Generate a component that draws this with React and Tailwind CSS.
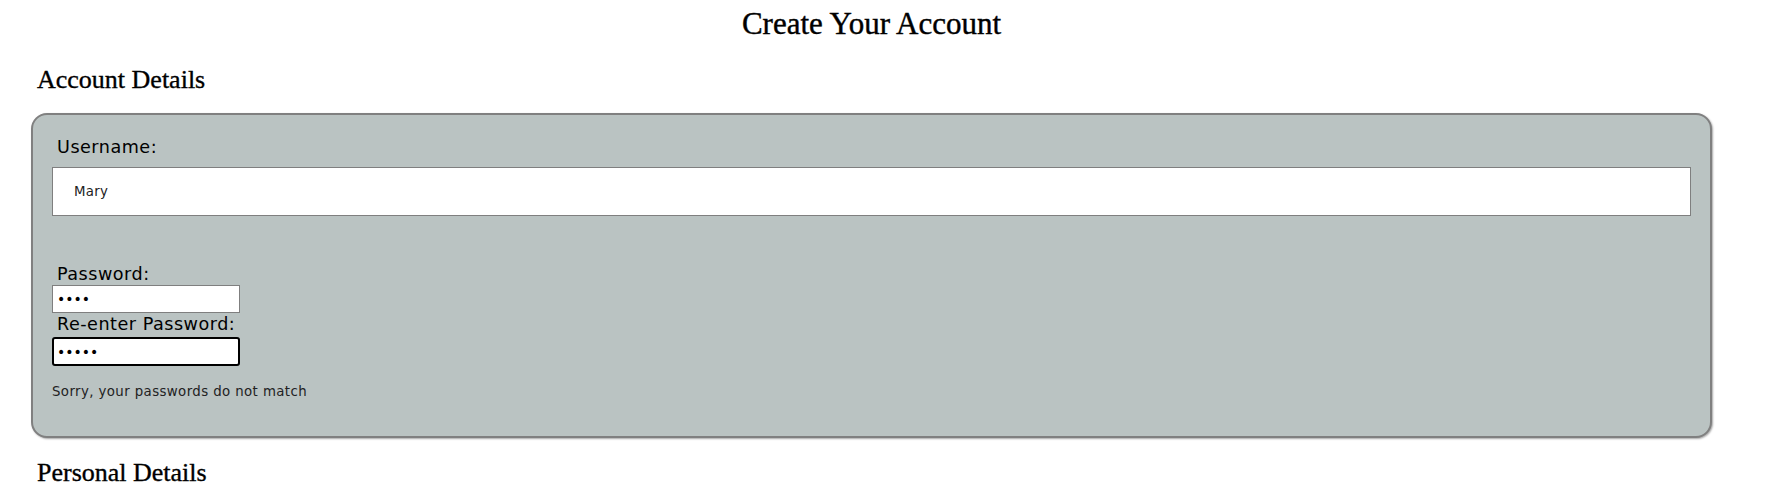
import React from 'react';

const serif = { fontFamily: '"Liberation Serif", "Times New Roman", serif' };

export default function App() {
    return (
        <div className="bg-white min-h-screen">
            <div className="ml-[31px] w-[1681px]">
                {/* Page title */}
                <h1 className="text-center text-[31px] leading-[40px] pt-[4px] text-black [-webkit-text-stroke:0.4px_black]" style={serif}>
                    Create Your Account
                </h1>

                {/* Account section */}
                <h2 className="mt-[20px] ml-[6px] text-[26px] leading-[32px] text-black [-webkit-text-stroke:0.35px_black]" style={serif}>
                    Account Details
                </h2>

                <div className="mt-[17px] bg-[#bac3c2] border-2 border-[#808080] rounded-[16px] shadow-[1px_1px_2px_rgba(0,0,0,0.35)] px-[19px] pt-[21px] pb-[36px] font-['DejaVu_Sans',sans-serif]">
                    <label className="block pl-[5px] text-[17.6px] leading-[22px] tracking-[0.5px] text-black">Username:</label>
                    <input
                        type="text"
                        defaultValue="Mary"
                        readOnly
                        className="mt-[9px] block w-full h-[49px] bg-white border border-[#7f7f7f] pl-[21px] text-[13.33px] tracking-[0.3px] text-[#222] outline-none"
                    />

                    <label className="mt-[47px] block pl-[5px] text-[17.6px] leading-[22px] tracking-[0.5px] text-black">Password:</label>
                    <input
                        type="password"
                        defaultValue="abcd"
                        readOnly
                        className="block w-[188px] h-[28px] bg-white border border-[#7f7f7f] pl-[4px] text-[14px] text-black outline-none"
                    />

                    <label className="block pl-[5px] text-[17.6px] leading-[22px] tracking-[0.5px] text-black">Re-enter Password:</label>
                    <input
                        type="password"
                        defaultValue="abcde"
                        readOnly
                        className="mt-[2px] block w-[188px] h-[29px] bg-white border-2 border-black rounded-[3px] pl-[3px] text-[14px] text-black outline-none"
                    />

                    <p className="mt-[18px] text-[13.33px] leading-[16px] tracking-[0.4px] text-[#222]">Sorry, your passwords do not match</p>
                </div>

                {/* Personal section */}
                <h2 className="mt-[19px] ml-[6px] text-[26px] leading-[32px] text-black [-webkit-text-stroke:0.35px_black]" style={serif}>
                    Personal Details
                </h2>
            </div>
        </div>
    );
}
